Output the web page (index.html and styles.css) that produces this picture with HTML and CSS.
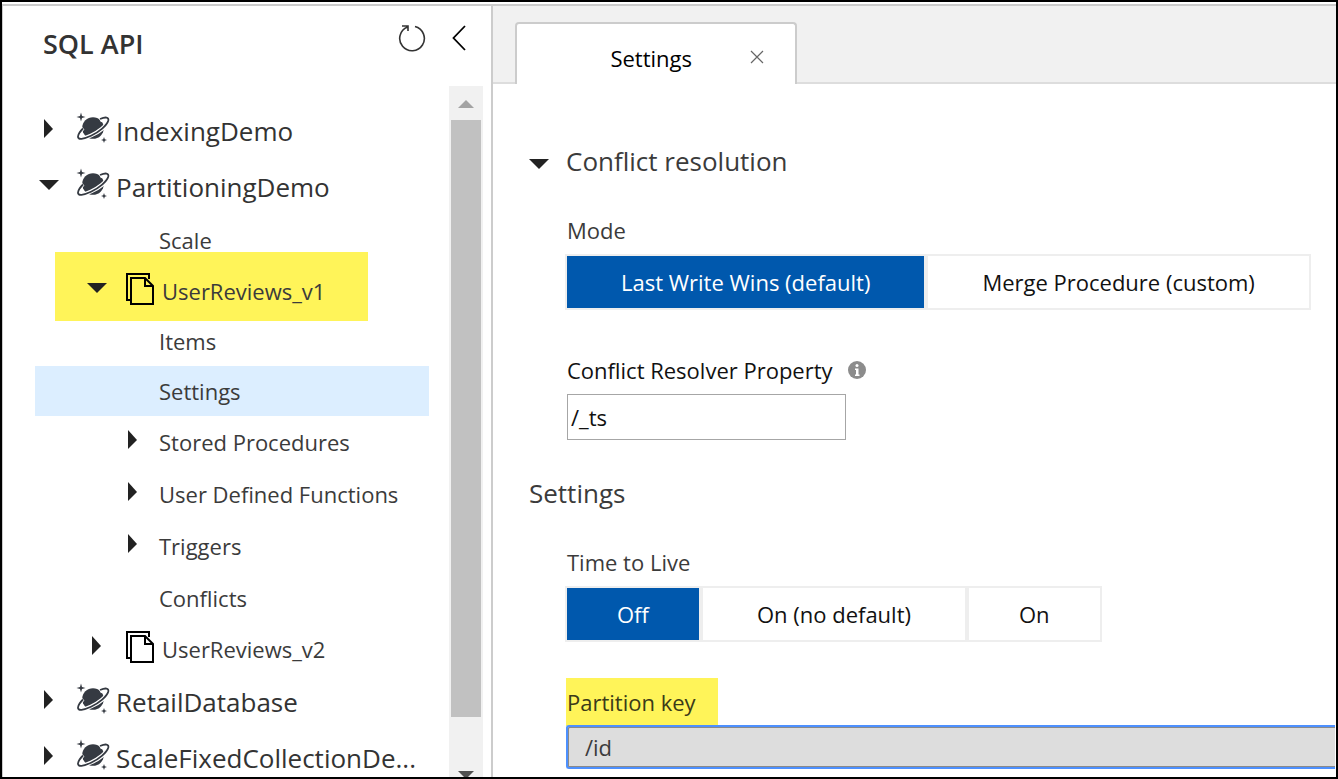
FILE: index.html
```html
<!DOCTYPE html>
<html lang="en">
<head>
<meta charset="utf-8">
<title>SQL API - Settings</title>
<link rel="stylesheet" href="styles.css">
</head>
<body>
<svg class="defs" aria-hidden="true">
  <symbol id="right" viewBox="0 0 20 20"><path d="M5 0L14 10L5 19z" fill="#222"/></symbol>
  <symbol id="down" viewBox="0 0 20 20"><path d="M0 5H20L10 15z" fill="#222"/></symbol>
  <symbol id="planet" viewBox="0 0 34 32">
    <circle cx="17" cy="16" r="10.800" fill="#353a42"/>
    <path d="M24 8.500C29 5.800 32.500 6 31.600 9.500C30.500 14 23 20 15 23.500C7.500 27 1.500 27.500 2 24C2.300 21.500 4.500 18.500 7 16" fill="none" stroke="#fff" stroke-width="4"/>
    <path d="M24 7C29.500 4.700 33 5 32.300 8.500C31 13.500 23 20 15 23.800C7.500 27.300 1.600 28 2 24.500C2.300 21.500 4.500 19 7 16.500" fill="none" stroke="#353a42" stroke-width="1.800"/>
    <path d="M5 .5L6 4L9.500 5L6 6L5 9.500L4 6L.5 5L4 4z" fill="#353a42"/>
    <path d="M28 25L28.800 27.200L31 28L28.800 28.800L28 31L27.200 28.800L25 28L27.200 27.200z" fill="#353a42"/>
  </symbol>
  <symbol id="docs" viewBox="0 0 28 32">
    <path d="M5 27H1V1H23V6M5 5H19L27 13V31H5zM19 5V13H27" fill="none" stroke="#000" stroke-width="2"/>
  </symbol>
</svg>
<div class="window">
  <aside class="sidebar">
    <header class="sidebar-head">
      <h1>SQL API</h1>
      <button class="icon-button" aria-label="Refresh"><svg width="28" height="28" viewBox="0 0 28 28"><path d="M17 2.500A12.300 12.300 0 1 1 9.500 3M4 2H10V7" fill="none" stroke="#333" stroke-width="1.600"/></svg></button>
      <button class="icon-button" aria-label="Collapse"><svg width="14" height="26" viewBox="0 0 14 26"><path d="M13 1L1.500 13L13 25" fill="none" stroke="#000" stroke-width="1.800"/></svg></button>
    </header>
    <div class="tree-area">
      <ul class="tree">
        <li class="database"><svg class="arrow"><use href="#right"/></svg><svg class="planet"><use href="#planet"/></svg><span>IndexingDemo</span></li>
        <li class="database"><svg class="arrow"><use href="#down"/></svg><svg class="planet"><use href="#planet"/></svg><span>PartitioningDemo</span></li>
        <li class="leaf">Scale</li>
        <li class="collection marked"><svg class="arrow"><use href="#down"/></svg><svg class="docs"><use href="#docs"/></svg><span>UserReviews_v1</span></li>
        <li class="leaf">Items</li>
        <li class="leaf selected">Settings</li>
        <li class="folder"><svg class="arrow"><use href="#right"/></svg><span>Stored Procedures</span></li>
        <li class="folder"><svg class="arrow"><use href="#right"/></svg><span>User Defined Functions</span></li>
        <li class="folder"><svg class="arrow"><use href="#right"/></svg><span>Triggers</span></li>
        <li class="folder plain"><span>Conflicts</span></li>
        <li class="collection"><svg class="arrow"><use href="#right"/></svg><svg class="docs"><use href="#docs"/></svg><span>UserReviews_v2</span></li>
        <li class="database"><svg class="arrow"><use href="#right"/></svg><svg class="planet"><use href="#planet"/></svg><span>RetailDatabase</span></li>
        <li class="database"><svg class="arrow"><use href="#right"/></svg><svg class="planet"><use href="#planet"/></svg><span>ScaleFixedCollectionDe...</span></li>
      </ul>
      <div class="scrollbar" aria-hidden="true">
        <svg width="34" height="34" viewBox="0 0 34 34"><path d="M9 22L17 14L25 22z" fill="#a3a3a3"/></svg>
        <div class="thumb"></div>
        <div class="track"></div>
        <svg width="34" height="20" viewBox="0 0 34 20"><path d="M9 14L17 22L25 14z" fill="#505050"/></svg>
      </div>
    </div>
  </aside>
  <main class="main">
    <div class="tabs">
      <div class="tab"><span>Settings</span><button class="close" aria-label="Close"><svg width="14" height="14" viewBox="0 0 14 14"><path d="M1 1L13 13M13 1L1 13" stroke="#666" stroke-width="1.200"/></svg></button></div>
    </div>
    <div class="content">
      <h2><svg class="arrow"><use href="#down"/></svg>Conflict resolution</h2>
      <section class="fields">
        <fieldset>
          <legend>Mode</legend>
          <div class="toggle">
            <label class="wide"><input type="radio" name="mode" checked><span>Last Write Wins (default)</span></label>
            <label class="wide"><input type="radio" name="mode"><span>Merge Procedure (custom)</span></label>
          </div>
        </fieldset>
        <div class="field">
          <label class="dark" for="resolver">Conflict Resolver Property<svg class="info" viewBox="0 0 18 18"><circle cx="9" cy="9" r="9" fill="#8c8c8c"/><circle cx="9" cy="4.500" r="1.500" fill="#fff"/><path d="M7 7.500H10.500V13.500H11.500V15H7V13.500H8V9H7z" fill="#fff"/></svg></label>
          <input class="resolver" id="resolver" type="text" value="/_ts">
        </div>
      </section>
      <h2>Settings</h2>
      <section class="fields">
        <fieldset>
          <legend>Time to Live</legend>
          <div class="toggle">
            <label><input type="radio" name="ttl" checked><span>Off</span></label>
            <label class="wide"><input type="radio" name="ttl"><span>On (no default)</span></label>
            <label><input type="radio" name="ttl"><span>On</span></label>
          </div>
        </fieldset>
        <div class="field">
          <label class="highlight" for="partition">Partition key</label>
          <input class="partition" id="partition" type="text" value="/id" readonly>
        </div>
      </section>
    </div>
  </main>
</div>
</body>
</html>
```
FILE: styles.css
```css
* { box-sizing: border-box; }
body {
  margin: 0;
  font-family: "Open Sans", "Noto Sans", sans-serif;
  font-size: 22px;
  color: #3b3b3b;
  background: #fff;
}
button { padding: 0; border: 0; background: none; display: flex; }
svg { display: block; flex: none; }
.defs { position: absolute; width: 0; height: 0; }
.window {
  display: flex;
  height: 100vh;
  overflow: hidden;
  border: 2px solid #000;
  padding-top: 2px;
}
.sidebar {
  display: flex;
  flex-direction: column;
  flex: none;
  width: 491px;
  border: solid #ccc;
  border-width: 2px 2px 0 1px;
}
.sidebar-head {
  display: flex;
  align-items: center;
  gap: 26px;
  height: 80px;
  padding: 0 25px 16px 40px;
}
h1 { flex: 1; margin: 12px 0 0; font-size: 27px; line-height: 36px; font-weight: 600; color: #333; }
.tree-area { display: flex; flex: 1; min-height: 0; }
.tree {
  flex: 1;
  min-width: 0;
  margin: 0;
  padding: 17px 20px 0 32px;
  list-style: none;
  overflow: hidden;
}
.tree li { display: flex; align-items: center; height: 50px; position: relative; }
.arrow { width: 20px; height: 20px; }
.tree .database { height: 56px; padding-left: 4px; font-size: 26px; color: #333; }
.database .planet { width: 34px; height: 32px; margin: 0 6px 7px 17px; }
.database .arrow { margin-bottom: 4px; }
.database span { white-space: nowrap; }
.tree .leaf { padding-left: 124px; }
.tree .selected { background: #dceeff; }
.tree .collection { padding-left: 52px; }
.collection .docs { width: 28px; height: 32px; margin: 0 8px 4px 19px; }
.collection .arrow { margin-bottom: 6px; }
.tree .folder { height: 52px; padding-left: 88px; }
.folder .arrow { margin: 0 16px 4px 0; }
.tree .plain { padding-left: 124px; }
.tree .marked { height: 51px; }
.marked::before {
  content: "";
  position: absolute;
  inset: -13px 61px -5px 20px;
  background: #fff459;
  z-index: -1;
}
.scrollbar {
  display: flex;
  flex-direction: column;
  width: 34px;
  margin-right: 8px;
  background: #f1f1f1;
}
.thumb { flex: 15; margin: 0 2px; background: #c1c1c1; }
.track { flex: 1; }
.main { flex: 1; min-width: 0; border-top: 2px solid #ccc; }
.tabs {
  display: flex;
  height: 78px;
  padding: 16px 22px 0;
  background: #f1f1f1;
  box-shadow: inset 0 -2px #ddd;
}
.tab {
  display: flex;
  align-items: center;
  justify-content: flex-end;
  gap: 58px;
  width: 282px;
  padding: 8px 31px 0;
  color: #000;
  background: #fff;
  border: 2px solid #ccc;
  border-bottom: 0;
  border-radius: 4px 4px 0 0;
}
.close { padding-bottom: 2px; }
.content { padding: 57px 0 0 36px; }
h2 {
  display: flex;
  align-items: center;
  gap: 17px;
  margin: 0;
  font-size: 26px;
  line-height: 40px;
  font-weight: 400;
}
h2 .arrow { margin-top: 6px; }
.fields { padding: 25px 0 33px 38px; }
fieldset { margin: 0; padding: 0; border: 0; }
legend, .field label { display: flex; align-items: center; width: fit-content; padding: 0; line-height: 48px; }
.toggle { display: flex; margin-left: -2px; }
.toggle label { position: relative; border: 2px solid #eee; color: #111; }
.toggle input { position: absolute; inset: 0; margin: 0; opacity: 0; }
.toggle span { display: block; padding: 0 50px; line-height: 52px; }
.toggle .wide span { padding: 0 54px; }
.toggle input:checked + span { background: #0058ad; color: #fff; }
.field { padding-top: 36px; }
.field .dark { color: #111; }
.info { width: 18px; height: 18px; margin-left: 15px; }
.field input { display: block; font: inherit; outline: 0; }
.resolver { width: 279px; height: 46px; padding: 0 3px; border: 1px solid #a6a6a6; color: #111; }
.field .highlight { margin-left: -1px; padding: 0 22px 0 1px; background: #fff459; color: #3b3a18; }
.partition {
  width: 100%;
  height: 44px;
  margin: -1px 0 0 -1px;
  padding: 0 17px;
  border: 2px solid #4d90fe;
  border-right: 0;
  border-radius: 3px 0 0 3px;
  box-shadow: inset 1px 1px #8a8a8a, inset 0 -1px #8a8a8a;
  background: #ddd;
  color: #3b3b3b;
}
```
